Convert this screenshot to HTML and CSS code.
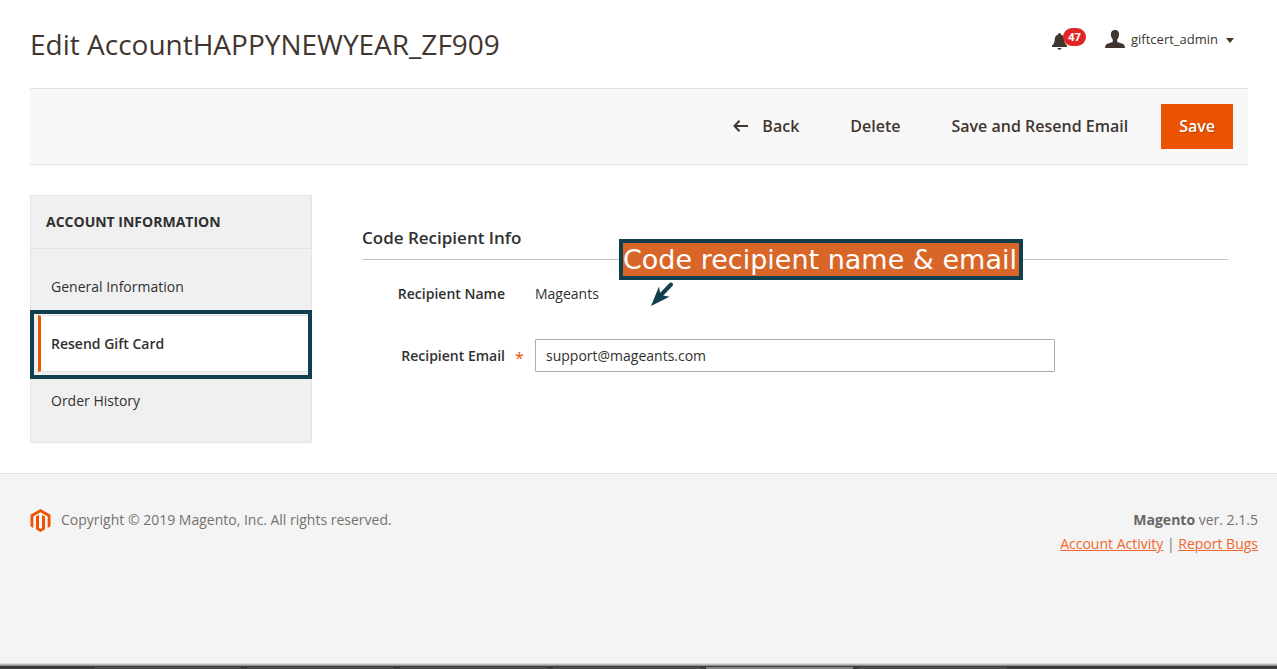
FILE: index.html
```html
<!DOCTYPE html>
<html lang="en">
<head>
<meta charset="utf-8">
<title>Edit Account</title>
<link rel="stylesheet" href="styles.css">
</head>
<body>
<div class="page">
  <header class="header">
    <h1 class="title">Edit AccountHAPPYNEWYEAR_ZF909</h1>
    <div class="tools">
      <button class="bell" type="button" aria-label="Notifications">
        <svg width="15" height="17" viewBox="0 0 15 17" fill="#41362f" aria-hidden="true"><path d="M7.500 0a1.300 1.300 0 0 0-1.300 1.400C3.600 2 2.900 4.200 2.700 6.500 2.500 9.500 2 11 0 12.500V14h15v-1.500c-2-1.500-2.500-3-2.700-6-.2-2.300-.9-4.500-3.500-5.100A1.300 1.300 0 0 0 7.500 0zM5.500 15h4a2 1.800 0 0 1-4 0z"/></svg>
        <span class="badge">47</span>
      </button>
      <button class="account" type="button">
        <svg width="20" height="18" viewBox="0 0 20 18" fill="#41362f" aria-hidden="true"><path d="M10 0C7.200 0 5.800 1.800 5.900 4.600c.1 2 .8 3.700 1.900 4.900v2c-.5 1-2.600 1.300-4.700 2.100C1 14.300.2 15.300 0 18h20c-.2-2.700-1-3.700-3.100-4.400-2.100-.8-4.200-1.100-4.700-2.100v-2c1.100-1.200 1.800-2.900 1.900-4.900C14.200 1.800 12.800 0 10 0z"/></svg>
        <span>giftcert_admin</span>
        <svg class="caret" width="8" height="5" viewBox="0 0 8 5" fill="#41362f" aria-hidden="true"><path d="M0 0h8L4 5z"/></svg>
      </button>
    </div>
  </header>

  <div class="actions">
    <button class="action" type="button">
      <svg width="15" height="12" viewBox="0 0 15 12" fill="none" stroke="#41362f" stroke-width="2" aria-hidden="true"><path d="M6.500 .7L1.500 6l5 5.300M1.500 6H15"/></svg>
      <span>Back</span>
    </button>
    <button class="action" type="button">Delete</button>
    <button class="action" type="button">Save and Resend Email</button>
    <button class="action primary" type="button">Save</button>
  </div>

  <div class="columns">
    <nav class="side" aria-label="Account information">
      <h2 class="side-title">ACCOUNT INFORMATION</h2>
      <ul class="side-list">
        <li><a class="side-link" href="#general">General Information</a></li>
        <li class="current"><a class="side-link active" href="#resend">Resend Gift Card</a></li>
        <li><a class="side-link" href="#history">Order History</a></li>
      </ul>
    </nav>
    <main class="main">
      <form class="form">
        <div class="legend">
          <h2 class="legend-text">Code Recipient Info</h2>
          <div class="note">Code recipient name &amp; email
            <svg class="note-arrow" width="24" height="26" viewBox="0 0 24 26" aria-hidden="true"><path d="M21 3.500L10 15" stroke="#113f4e" stroke-width="4" stroke-linecap="round"/><path d="M1 25L9 5.500l1.500 8.500 9 1.800z" fill="#113f4e"/></svg>
          </div>
        </div>
        <div class="field name-field">
          <span class="label">Recipient Name</span>
          <span class="value">Mageants</span>
        </div>
        <div class="field">
          <label class="label required" for="email">Recipient Email</label>
          <input class="text" id="email" type="text" value="support@mageants.com">
        </div>
      </form>
    </main>
  </div>
</div>

<footer class="footer">
  <div class="copyright">
    <svg width="21" height="23" viewBox="0 0 21 23" fill="#eb5202" aria-hidden="true"><path d="M10.500 0L.5 5.800v11.500L3.300 19V7.500l7.200-4.200 7.200 4.200V19l2.800-1.700V5.800z"/><path d="M6 7.500v12.700l4.500 2.800 4.500-2.800V7.500L12 6v13l-1.500 1L9 19V6z"/></svg>
    <span>Copyright © 2019 Magento, Inc. All rights reserved.</span>
  </div>
  <div class="legal">
    <p class="line"><strong>Magento</strong> ver. 2.1.5</p>
    <p class="line"><a class="link" href="#activity">Account Activity</a> | <a class="link" href="#bugs">Report Bugs</a></p>
  </div>
</footer>
<div class="taskbar"><i class="blank"></i><i></i><i></i><i></i><i></i><i class="lit"></i><i></i></div>
</body>
</html>
```

FILE: styles.css
```css
* { box-sizing: border-box; }

body {
  margin: 0;
  min-height: 100vh;
  display: flex;
  flex-direction: column;
  background: #fff;
  color: #303030;
  font: 14px/24px "Open Sans", "Noto Sans", sans-serif;
}

button { font: inherit; color: #41362f; background: none; border: 0; padding: 0; }
h1, h2, p, ul { margin: 0; padding: 0; }

.page { padding: 0 29px 30px 30px; }

.header {
  height: 88px;
  display: flex;
  justify-content: space-between;
}
.title { margin-top: 25px; font-size: 28px; line-height: 38px; font-weight: 400; color: #41362f; }
.tools { display: flex; align-items: flex-start; gap: 19px; padding: 27px 14px 0 0; }
.bell { position: relative; width: 34px; height: 23px; display: flex; align-items: flex-end; }
.badge {
  position: absolute;
  right: 0;
  top: 1px;
  width: 23px;
  border-radius: 9px;
  background: #e22626;
  color: #fff;
  font-size: 11px;
  line-height: 18px;
  font-weight: 700;
  text-align: center;
}
.account { display: flex; align-items: center; gap: 6px; font-size: 13px; }
.caret { margin: 2px 0 0 2px; }

.actions {
  display: flex;
  justify-content: flex-end;
  align-items: center;
  padding: 15px;
  background: #f8f8f8;
  border-top: 1px solid #e3e3e3;
  border-bottom: 1px solid #e3e3e3;
}
.action {
  display: flex;
  align-items: center;
  justify-content: center;
  gap: 14px;
  height: 45px;
  margin-right: 15px;
  padding: 0 18px 2px;
  font-size: 16px;
  font-weight: 600;
}
.primary { margin: 0; background: #eb5202; color: #fff; text-shadow: 1px 1px 0 rgba(0, 0, 0, .25); }

.columns { display: flex; gap: 50px; margin-top: 30px; }
.side { flex: 0 0 282px; background: #f0f0f0; border: 1px solid #e3e3e3; }
.side-title {
  padding: 14px 15px;
  border-bottom: 1px solid #e3e3e3;
  font-size: 14px;
  font-weight: 700;
}
.side-list { list-style: none; padding: 9px 0 13px 7px; }
.side-link {
  display: block;
  padding: 16px 10px 15px;
  border: solid transparent;
  border-width: 1px 0 1px 3px;
  line-height: 24px;
  color: #303030;
  text-decoration: none;
}
.active { margin-right: -1px; background: #fff; border-color: #e3e3e3; border-left-color: #eb5202; font-weight: 600; }
.current { position: relative; }
.current::after {
  content: "";
  position: absolute;
  inset: -5px -1px -7px -8px;
  border: 4px solid #113f4e;
  pointer-events: none;
}

.main { flex: 1; min-width: 0; padding: 30px 20px 0 0; }
.legend { position: relative; padding-bottom: 9px; border-bottom: 1px solid #cac3b4; }
.legend-text { font-size: 17px; line-height: 25px; font-weight: 600; }
.note {
  position: absolute;
  left: 257px;
  top: 14px;
  padding: 0 2px 0 0;
  border: 4px solid #113f4e;
  background: #d86628;
  color: #fff;
  font: 27px/33px "DejaVu Sans", sans-serif;
  white-space: nowrap;
}
.note-arrow { position: absolute; left: 27px; top: 38px; }
.field { display: grid; grid-template-columns: 143px minmax(0, 520px); column-gap: 30px; align-items: center; }
.name-field { margin: 22px 0 33px; }
.label { position: relative; text-align: right; font-weight: 600; }
.required::after { content: "*"; position: absolute; left: 100%; margin-left: 10px; top: 2px; color: #eb5202; font-size: 16px; font-weight: 400; }
.text {
  height: 33px;
  padding: 0 10px;
  border: 1px solid #adadad;
  border-radius: 1px;
  background: #fff;
  color: #303030;
  font: inherit;
}

.footer {
  flex: 1;
  display: flex;
  justify-content: space-between;
  padding: 34px 19px 0 30px;
  border-top: 1px solid #e3e3e3;
  background: #f4f4f4;
  color: #76716c;
}
.copyright { display: flex; align-items: center; align-self: flex-start; gap: 10px; }
.legal { text-align: right; }
.legal strong { color: #666; }
.link { color: #ef672f; }

.taskbar {
  display: flex;
  gap: 6px;
  height: 6px;
  padding-top: 4px;
  background: linear-gradient(#dcdcdc 1px, #b9bbba 1px 2px, #8d908e 2px 3px, #3a3d3c 3px);
}
.taskbar i { flex: 0 0 147px; background: #4b4d4c; }
.taskbar .blank { flex-basis: 88px; background: none; }
.taskbar .lit { background: #858786; }
```
